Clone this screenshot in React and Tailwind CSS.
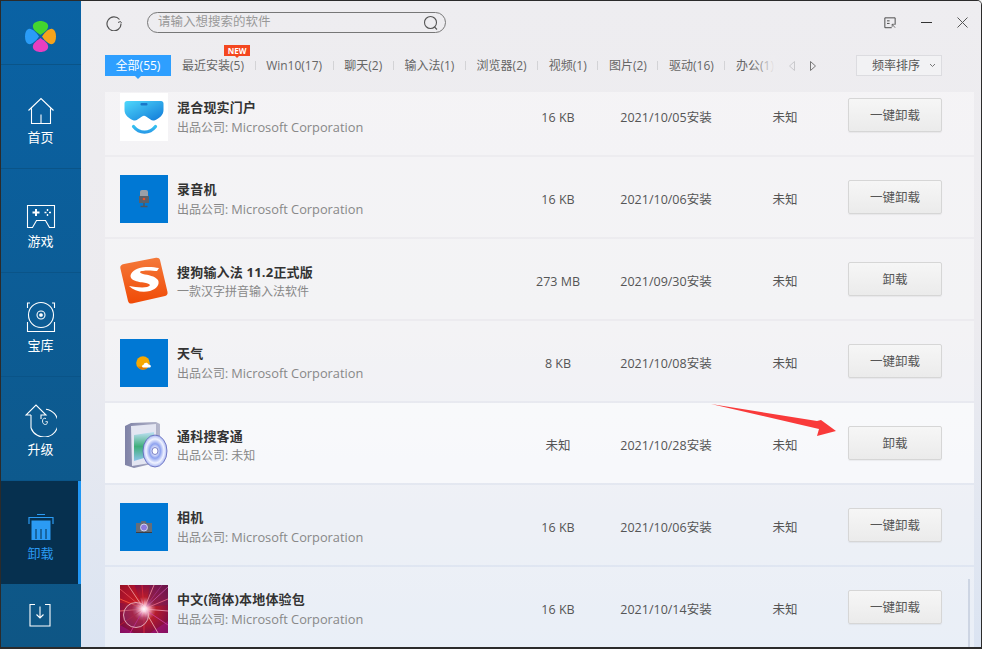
import React from "react";

const FONT = { fontFamily: '"Open Sans","Noto Sans CJK SC",sans-serif' };

function Logo() {
  return (
    <svg width="31" height="31" viewBox="0 0 31 31">
      <path d="M15.500 14C11 11 7 8 8 4 9 1 13 0 15.500 0S22 1 23 4C24 8 20 11 15.500 14Z" fill="#43d62f" />
      <path d="M14 15.500C11 11 6.500 7 3.500 8 1 9 0 12 0 15.500S1 22 3.500 23C6.500 24 11 20 14 15.500Z" fill="#2a9cf7" />
      <path d="M17 15.500C20 11 24.500 7 27.500 8 30 9 31 12 31 15.500S30 22 27.500 23C24.500 24 20 20 17 15.500Z" fill="#f5a31c" />
      <path d="M15.500 17C20 20 24 23 23 27 22 30 18 31 15.500 31S9 30 8 27C7 23 11 20 15.500 17Z" fill="#e83ec0" />
    </svg>
  );
}

function NavIcon({ kind }) {
  const p = { fill: "none", stroke: "#fff", strokeWidth: 1.1 };
  if (kind === "home")
    return (
      <svg width="28" height="28" viewBox="0 0 28 28" {...p}>
        <path d="M1.500 13.500 14 1.500l12.500 12M4.500 11.500V26.500h19V11.500M14 26.500v-9" />
      </svg>
    );
  if (kind === "game")
    return (
      <svg width="30" height="26" viewBox="0 0 30 26" {...p}>
        <path d="M1.500 2.500h27v22h-5l-4-7h-9l-4 7h-5z" />
        <path d="M6.500 9.500h7M10 6v7" strokeWidth="2" />
        <path d="M21.500 6v2M21.500 11v2M18.500 9.500h2M23 9.500h2" strokeWidth="1.400" />
      </svg>
    );
  if (kind === "disc")
    return (
      <svg width="30" height="32" viewBox="0 0 30 32" {...p}>
        <path d="M4 2H1.500v5M26 2h2.500v5M1.500 21v9.500h27V21" />
        <circle cx="15" cy="14" r="12.500" />
        <circle cx="15" cy="14" r="4" />
        <circle cx="15" cy="14" r="1.300" fill="#fff" />
      </svg>
    );
  if (kind === "up")
    return (
      <svg width="32" height="34" viewBox="0 0 32 34" {...p}>
        <path d="M6 12H1L11 2l10 10h-5v4" />
        <path d="M6 12v13" />
        <path d="M21 6.200A14 14 0 1 1 6 25" />
        <path d="M21 15.500c-2-.8-3.500.3-3.500 2.500s1.200 3.500 2.800 3.500 2.200-1.300 2.200-2.800h-2" strokeWidth="0.900" />
      </svg>
    );
  if (kind === "trash")
    return (
      <svg width="26" height="28" viewBox="0 0 26 28">
        <path d="M9 1.500h8M1 11V4.500h24V11" fill="none" stroke="#2b9bf4" strokeWidth="1.200" />
        <path d="M3.500 7.500h19V27h-19z" fill="#2b9bf4" />
        <path d="M8 16v10M13 16v10M18 16v10" stroke="#06304f" strokeWidth="1" />
      </svg>
    );
  return (
    <svg width="22" height="24" viewBox="0 0 22 24" {...p}>
      <path d="M6 1.500H1v21.500h20V1.500h-5" />
      <path d="M11 3.500v11M7.500 11.500l3.500 3.500 3.500-3.500" />
    </svg>
  );
}

function NavItem({ kind, label, active }) {
  return (
    <div className={`relative h-[104px] flex flex-col items-center justify-center gap-[3px] pb-[1px] pr-[1px] border-t border-[#0a5488] ${active ? "bg-[#06304f] text-[#2b9bf4]" : "text-white"}`}>
      <div className="h-[38px] flex items-end justify-center"><NavIcon kind={kind} /></div>
      <span className="text-[13px] leading-[18px]">{label}</span>
      {active && <div className="absolute right-0 top-0 bottom-0 w-[3px] bg-[#2196f3]" />}
    </div>
  );
}

function Tile({ children }) {
  return <div className="w-12 h-12 bg-[#0078d4] flex items-center justify-center">{children}</div>;
}

const rays = [
  ["M24 24 0 4", "#e8505a"], ["M24 24 8 0", "#f0a0a0"], ["M24 24 22 0", "#d62a3a"], ["M24 24 34 0", "#f08a9a"],
  ["M24 24 48 2", "#c050a0"], ["M24 24 48 14", "#e86a8a"], ["M24 24 48 26", "#f09ab0"], ["M24 24 48 40", "#d040a0"],
  ["M24 24 38 48", "#f0b0b0"], ["M24 24 24 48", "#e03040"], ["M24 24 10 48", "#d02a90"], ["M24 24 0 40", "#c02030"],
  ["M24 24 0 26", "#f07070"], ["M24 24 0 14", "#ff5a40"], ["M24 24 14 0", "#b01030"], ["M24 24 42 0", "#a03080"],
];

const icons = {
  mixed: (
    <div className="w-12 h-12 bg-white">
      <svg width="48" height="48" viewBox="0 0 48 48">
        <defs>
          <linearGradient id="mr" x1="0" y1="0" x2="1" y2="1"><stop offset="0" stopColor="#4fd8fb" /><stop offset="1" stopColor="#1079d8" /></linearGradient>
          <linearGradient id="sm" x1="0" y1="0" x2="0" y2="1"><stop offset="0" stopColor="#35c0f0" /><stop offset="1" stopColor="#2a9ce8" /></linearGradient>
        </defs>
        <path d="M7 8h34c1.500 0 2.500 1 2.500 2.500V17c0 5-4 8-8 10-2 .8-3.500.8-5-.5L26 23.500c-1.200-.9-2.800-.9-4 0l-4.500 3c-1.500 1.300-3 1.300-5 .5-4-2-8-5-8-10v-6.500C4.500 9 5.500 8 7 8z" fill="url(#mr)" />
        <rect x="20.500" y="10" width="7" height="2.600" rx="1" fill="#1a78c9" />
        <path d="M13.500 33.500c6 7.500 16 7.500 22 0" fill="none" stroke="url(#sm)" strokeWidth="3.200" strokeLinecap="round" />
      </svg>
    </div>
  ),
  rec: (
    <Tile>
      <svg width="12" height="18" viewBox="0 0 12 18">
        <rect x="2" y="0" width="8" height="13" rx="2" fill="#9aa0a8" />
        <rect x="1" y="6" width="10" height="7" fill="#5b6068" />
        <circle cx="6" cy="9" r="1.300" fill="#e8502b" />
        <path d="M6 13v3M2.500 16.500h7" stroke="#50555c" strokeWidth="1.500" />
      </svg>
    </Tile>
  ),
  sogou: (
    <svg width="48" height="48" viewBox="0 0 48 48">
      <defs>
        <linearGradient id="sg" x1="0" y1="0" x2="0" y2="1"><stop offset="0" stopColor="#f4793a" /><stop offset="1" stopColor="#f04a06" /></linearGradient>
      </defs>
      <path d="M4 7 36 .8c2-.3 3.500.5 4 2.200L47.500 35c.4 2-.5 3.500-2.500 4L12 46.500c-2 .4-3.500-.5-4-2.500L.3 11c-.3-2 1-3.500 3.700-4z" fill="url(#sg)" />
      <path d="M39 11C30 9 15 9 11 17c-3 7 9 8 15 9 5 1 5 3 1 4-5 1-12 0-18-1 5 5 13 7 21 5 7-2 10-7 8-11-3-4-10-5-15-6-4-1-4-3 0-3 5-1 10 0 14 0z" fill="#fff" />
    </svg>
  ),
  weather: (
    <Tile>
      <svg width="16" height="14" viewBox="0 0 16 14">
        <circle cx="7" cy="7" r="6.800" fill="#f5a800" />
        <path d="M1.500 10.500a6.800 6.800 0 0 0 10.500 1z" fill="#e07a00" />
        <path d="M7.500 11.500c-2 0-2-2.500 0-2.500.4-2.500 4-3 5-.5 2.500-.3 3.500 3 .8 3z" fill="#fff" />
      </svg>
    </Tile>
  ),
  disk: (
    <svg width="48" height="48" viewBox="0 0 48 48">
      <defs>
        <linearGradient id="bx" x1="0" y1="0" x2="1" y2="0"><stop offset="0" stopColor="#7f82a6" /><stop offset="1" stopColor="#b6b8cc" /></linearGradient>
        <linearGradient id="sc" x1="0" y1="0" x2="0" y2="1"><stop offset="0" stopColor="#bfe0f5" /><stop offset="0.500" stopColor="#3fae7a" /><stop offset="1" stopColor="#8cc4ea" /></linearGradient>
        <radialGradient id="cd"><stop offset="0.150" stopColor="#ffffff" /><stop offset="0.450" stopColor="#8ea2ef" /><stop offset="0.750" stopColor="#f0f3ff" /><stop offset="1" stopColor="#a8b6f2" /></radialGradient>
      </defs>
      <path d="M5 5 11 2 36 1l4 2v38l-26 6-9-3z" fill="url(#bx)" />
      <path d="M11 5l25-2v38l-24 4z" fill="#e4e6f2" />
      <path d="M14 14l20-3v23l-20 6z" fill="url(#sc)" />
      <ellipse cx="35" cy="30" rx="12" ry="16" fill="url(#cd)" stroke="#5d63b8" strokeWidth="0.800" />
      <ellipse cx="35" cy="30" rx="3" ry="3.500" fill="#fff" stroke="#5d63b8" strokeWidth="0.800" />
    </svg>
  ),
  cam: (
    <Tile>
      <svg width="16" height="14" viewBox="0 0 16 14">
        <path d="M0 3h4.500L5.500 1h4l1 2H16v10H0z" fill="#666d78" />
        <circle cx="8" cy="7.500" r="3.500" fill="#8d7be0" stroke="#d8deee" strokeWidth="0.900" />
        <rect x="0" y="12" width="16" height="1" fill="#3a3f46" />
      </svg>
    </Tile>
  ),
  plasma: (
    <svg width="48" height="48" viewBox="0 0 48 48">
      <defs>
        <radialGradient id="pl" cx="0.500" cy="0.500" r="0.720"><stop offset="0" stopColor="#fff" /><stop offset="0.100" stopColor="#f0a8b8" /><stop offset="0.350" stopColor="#b51c2c" /><stop offset="0.700" stopColor="#8a1040" /><stop offset="1" stopColor="#580a30" /></radialGradient>
        <radialGradient id="glow"><stop offset="0" stopColor="#fff" /><stop offset="0.300" stopColor="#ffe0ea" stopOpacity="0.900" /><stop offset="1" stopColor="#ff80a0" stopOpacity="0" /></radialGradient>
      </defs>
      <rect width="48" height="48" fill="url(#pl)" />
      <path d="M30 0h18v20L26 22z" fill="#70205c" fillOpacity="0.500" />
      <path d="M0 0h14l8 20L0 18z" fill="#d01818" fillOpacity="0.500" />
      <path d="M0 40 14 48h-14zM30 48l18-12v12z" fill="#a01480" fillOpacity="0.600" />
      <g strokeWidth="1" opacity="0.850">
        {rays.map(([d, c]) => <path key={d} d={d} stroke={c} />)}
      </g>
      <circle cx="16" cy="30" r="12.500" fill="#7a3a90" fillOpacity="0.300" stroke="#eab4c0" strokeWidth="0.900" />
      <circle cx="24" cy="24" r="9" fill="url(#glow)" />
    </svg>
  ),
};

const rows = [
  { icon: "mixed", name: "混合现实门户", sub: "出品公司: ", ms: true, size: "16 KB", date: "2021/10/05安装", btn: "一键卸载" },
  { icon: "rec", name: "录音机", sub: "出品公司: ", ms: true, size: "16 KB", date: "2021/10/06安装", btn: "一键卸载" },
  { icon: "sogou", name: "搜狗输入法 11.2正式版", sub: "一款汉字拼音输入法软件", size: "273 MB", date: "2021/09/30安装", btn: "卸载" },
  { icon: "weather", name: "天气", sub: "出品公司: ", ms: true, size: "8 KB", date: "2021/10/08安装", btn: "一键卸载" },
  { icon: "disk", name: "通科搜客通", sub: "出品公司: 未知", size: "未知", date: "2021/10/28安装", btn: "卸载", hover: true },
  { icon: "cam", name: "相机", sub: "出品公司: ", ms: true, size: "16 KB", date: "2021/10/06安装", btn: "一键卸载" },
  { icon: "plasma", name: "中文(简体)本地体验包", sub: "出品公司: ", ms: true, size: "16 KB", date: "2021/10/14安装", btn: "一键卸载" },
];

function Row({ r }) {
  return (
    <div className={`h-[80px] mb-[2px] pt-[6px] flex items-center pl-[15px] text-[12.500px] ${r.hover ? "bg-white/70" : "bg-white/40"}`}>
      <div className="w-12 h-12 shrink-0 -mt-[2px]">{icons[r.icon]}</div>
      <div className="w-[331px] ml-[9px] -mt-[2px]">
        <div className="font-bold text-[#333] h-[21px] leading-[22px] text-[13px] tracking-[0.200px]">{r.name}</div>
        <div className="text-[#888] leading-[20px] text-[12px] whitespace-pre">
          {r.sub}
          {r.ms && <span className="text-[12.800px]">Microsoft Corporation</span>}
        </div>
      </div>
      <div className="w-[100px] text-center text-[#555]">{r.size}</div>
      <div className="w-[112px] ml-[2px] text-center text-[#555]">{r.date}</div>
      <div className="w-[126px] text-center text-[#555]">未知</div>
      <button className="w-[94px] h-[34px] pt-[2px] -mt-[6px] rounded-[2px] border border-[#d6d6d6] bg-gradient-to-b from-[#f6f6f6] to-[#ebebeb] text-[#555] text-[12.500px] shadow-[0_1px_1px_rgba(0,0,0,0.050)]">{r.btn}</button>
    </div>
  );
}

const tabs = ["最近安装(5)", "Win10(17)", "聊天(2)", "输入法(1)", "浏览器(2)", "视频(1)", "图片(2)", "驱动(16)", "办公(1)"];

export default function App() {
  return (
    <div style={FONT} className="relative w-[982px] h-[649px] overflow-hidden bg-[#f2f2f2]">
      <div className="h-[649px] flex border border-[#2b2b2b] border-b-2 rounded-tr-[5px] overflow-hidden">
        {/* sidebar */}
        <aside className="w-[80px] shrink-0 flex flex-col bg-gradient-to-b from-[#0a62a4] to-[#0e5685]">
          <div className="h-[63px] flex items-center justify-center pt-[7px] pr-[1px]"><Logo /></div>
          <NavItem kind="home" label="首页" />
          <NavItem kind="game" label="游戏" />
          <NavItem kind="disc" label="宝库" />
          <NavItem kind="up" label="升级" />
          <NavItem kind="trash" label="卸载" active />
          <div className="flex-1 flex items-center justify-center pb-[2px] pr-[2px]"><NavIcon kind="dl" /></div>
        </aside>

        {/* main */}
        <main className="flex-1 min-w-0 flex flex-col bg-gradient-to-b from-[#eeedf0] via-[#ecebef] to-[#dbe4f2]">
          <div className="h-[40px] flex items-center pl-[25px] pr-[13px] pt-[3px] shrink-0">
            <svg width="16" height="16" viewBox="0 0 16 16" fill="none" stroke="#555" strokeWidth="1.200">
              <path d="M13.500 4.500A7 7 0 1 0 15 8.500" />
              <path d="M12 7.500l2.500-1 1 1.500" strokeWidth="1" />
            </svg>
            <div className="ml-[25px] w-[299px] h-[21px] rounded-full border border-[#777] flex items-center pl-[10px] pr-[6px] justify-between">
              <span className="text-[12.500px] text-[#999]">请输入想搜索的软件</span>
              <svg width="16" height="16" viewBox="0 0 16 16" fill="none" stroke="#555" strokeWidth="1.100"><circle cx="7.500" cy="7.500" r="6" /><path d="M11.500 12l2.500 2.500" /></svg>
            </div>
            <div className="ml-auto flex items-center gap-[25px]">
              <svg width="12" height="12" viewBox="0 0 14 14" fill="none" stroke="#444" strokeWidth="1.100"><path d="M13 9V1H1v11.500h8" /><path d="M3.500 4.500h3M3.500 7.500h3" /><path d="M9.500 8.500l3.500 4M9.500 8.500v3M9.500 8.500h3" strokeWidth="0.800" /></svg>
              <div className="w-[11px] h-[1px] bg-[#333]" />
              <svg width="11" height="11" viewBox="0 0 11 11" fill="none" stroke="#555" strokeWidth="1"><path d="M.5.500l10 10M10.500.500l-10 10" /></svg>
            </div>
          </div>

          {/* tabs */}
          <div className="h-[51px] shrink-0 flex items-start pl-[24px] pt-[14px] text-[12px]">
            <div className="relative h-[21px] w-[66px] bg-[#2e9fff] text-white flex items-center justify-center">
              全部(55)
              <div className="absolute left-1/2 -bottom-[3px] -ml-[3px] border-x-[3px] border-x-transparent border-t-[3px] border-t-[#2e9fff]" />
            </div>
            <div className="relative w-[604px] flex items-center h-[21px] text-[#666]">
              {tabs.map((t, i) => (
                <React.Fragment key={t}>
                  <span className={`relative whitespace-nowrap ${i === 0 ? "ml-[11px]" : ""}`}>
                    {t}
                    {i === 0 && (
                      <span className="absolute left-[42px] -top-[12px] w-[26px] h-[11px] text-center bg-[#f4471f] text-white text-[8px] leading-[11px] font-bold">
                        NEW
                        <span className="absolute left-1/2 -ml-[2px] top-full border-x-[2px] border-x-transparent border-t-[2px] border-t-[#f4471f]" />
                      </span>
                    )}
                  </span>
                  {i < 8 && <span className="w-[1px] h-[9px] bg-[#d3d3d6] mx-[10.600px] shrink-0" />}
                </React.Fragment>
              ))}
              <div className="absolute right-0 top-0 bottom-0 w-[22px] bg-gradient-to-r from-[#eeedf0]/0 to-[#eeedf0]" />
            </div>
            <div className="h-[21px] flex items-center gap-[15px] ml-[14px]">
              <svg width="6" height="10" viewBox="0 0 6 10" fill="none" stroke="#c9c9cc"><path d="M5.500.5 .5 5l5 4.500z" /></svg>
              <svg width="6" height="10" viewBox="0 0 6 10" fill="none" stroke="#777"><path d="M.5.5 5.500 5l-5 4.500z" /></svg>
            </div>
            <div className="ml-[40px] w-[86px] h-[21px] border border-[#dcdce0] bg-[#f2f2f4] flex items-center pl-[15px] gap-[9px] text-[#555] text-[12px]">
              频率排序
              <svg width="7" height="5" viewBox="0 0 7 5" fill="none" stroke="#777"><path d="M1 1l2.500 2.500L6 1" /></svg>
            </div>
          </div>

          {/* list */}
          <div className="relative flex-1 min-h-0 overflow-hidden ml-[24px] mr-[7px]">
            <div className="-mt-[17px]">
              {rows.map((r) => <Row key={r.name} r={r} />)}
            </div>
            <div className="absolute right-[4px] bottom-0 h-[68px] w-[2px] bg-[#cdd5e3]" />
          </div>
        </main>
      </div>

      {/* annotation arrow */}
      <svg className="absolute left-[705px] top-[400px]" width="135" height="40" viewBox="705 400 135 40">
        <path d="M711 404 817 421 821 420 836 431 817 436 819 429Z" fill="#f93a3a" />
      </svg>
    </div>
  );
}
